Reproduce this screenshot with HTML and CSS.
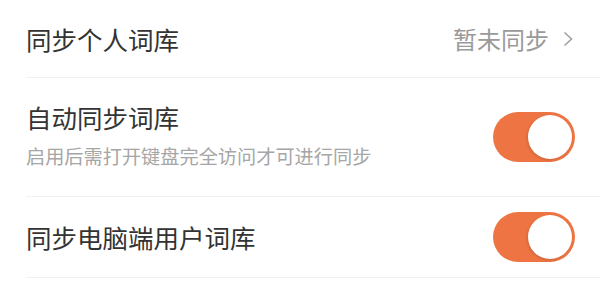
FILE: index.html
```html
<!DOCTYPE html>
<html>
<head>
  <title>词库同步</title>
  <link rel="stylesheet" href="styles.css">
</head>
<body>
  <div class="list">
    <div class="row row-link">
      <div class="title">同步个人词库</div>
      <div class="value">
        暂未同步
        <svg class="chevron" width="10" height="16" viewBox="0 0 10 16" fill="none">
          <path d="M1.5 1.5L8.5 8L1.5 14.5" stroke="#a0a0a0" stroke-width="1.6"/>
        </svg>
      </div>
    </div>
    <div class="row row-tall">
      <div class="text">
        <div class="title">自动同步词库</div>
        <div class="subtitle">启用后需打开键盘完全访问才可进行同步</div>
      </div>
      <div class="switch on"><span class="knob"></span></div>
    </div>
    <div class="row">
      <div class="title">同步电脑端用户词库</div>
      <div class="switch on"><span class="knob"></span></div>
    </div>
  </div>
</body>
</html>
```

FILE: styles.css
```css
body {
  margin: 0;
  background: #fff;
  font-family: "Noto Sans CJK SC", "Noto Sans", sans-serif;
  overflow: hidden;
}

.list {
  padding-left: 26px;
}

.row {
  display: flex;
  align-items: center;
  justify-content: space-between;
  height: 80px;
  padding-right: 25px;
  border-bottom: 1px solid #f0f0f0;
}

.row-link {
  height: 77px;
  padding-right: 27px;
}

.row-tall {
  height: 118px;
}

.title {
  font-size: 25.5px;
  color: #333;
  line-height: 1;
}

.subtitle {
  margin-top: 17px;
  font-size: 19.2px;
  color: #a6a6a6;
  line-height: 1;
}

.text {
  padding-bottom: 4px;
}

.value {
  display: flex;
  align-items: center;
  gap: 14px;
  font-size: 24px;
  color: #9a9a9a;
}

.switch {
  width: 82px;
  height: 50px;
  border-radius: 25px;
  background: #ee7543;
  position: relative;
}

.knob {
  position: absolute;
  top: 3px;
  right: 3px;
  width: 44px;
  height: 44px;
  border-radius: 50%;
  background: #fff;
  box-shadow: -1px 1px 3px rgba(0, 0, 0, 0.15);
}
```
